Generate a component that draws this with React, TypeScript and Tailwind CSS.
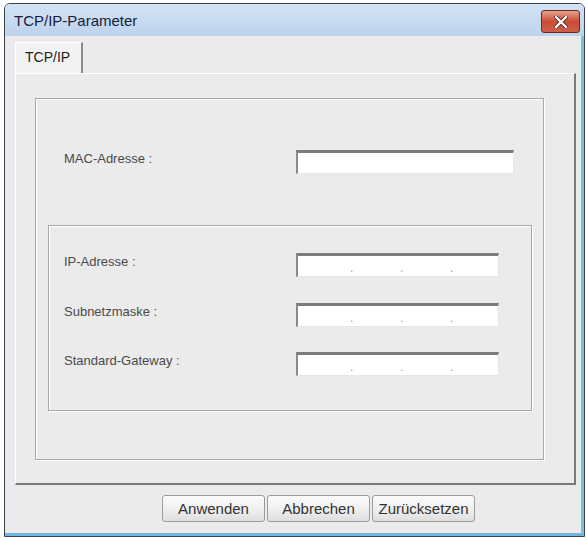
import React from 'react';

const font = { fontFamily: '"Liberation Sans", Arial, sans-serif' };

function Field({ width, ip }: { width: string; ip?: boolean }) {
    return (
        <div
            className={`${width} h-[24px] bg-white border-t-[3px] border-l-[2px] border-r border-b border-t-[#7c7c7c] border-l-[#8a8a8a] border-r-[#e6e6e6] border-b-[#e6e6e6] flex items-end`}
        >
            {ip && (
                <div className="flex pl-[52px] text-[12px] leading-[15px] text-[#c58894]">
                    <span className="w-[50px]">.</span>
                    <span className="w-[50px] text-[#a9a9b0]">.</span>
                    <span className="w-[50px]">.</span>
                </div>
            )}
        </div>
    );
}

function Row({ label, children, className }: { label: string; children: React.ReactNode; className?: string }) {
    return (
        <div className={`flex items-start ${className ?? ''}`}>
            <span className="w-[232px] pt-[1px] text-[13px] leading-[16px] text-[#4a4a4a]">{label}</span>
            {children}
        </div>
    );
}

export default function App() {
    return (
        <div className="min-h-screen bg-white pt-[3px] pl-[4px]" style={font}>
            <div className="w-[581px] h-[534px] border border-[#36404e] rounded-t-[6px] overflow-hidden flex flex-col">
                {/* Title bar */}
                <div className="h-[32px] flex items-start justify-between bg-gradient-to-b from-[#d3e3f4] to-[#bcd3ec]">
                    <span className="pl-[9px] pt-[8px] text-[15px] leading-[18px] text-[#17203a]">TCP/IP-Parameter</span>
                    <div className="mt-[6px] mr-[4px] w-[39px] h-[23px] rounded-[3px] border border-[#6e2a22] bg-gradient-to-b from-[#e3a08f] via-[#cc4b36] to-[#c9614a] flex items-center justify-center">
                        <svg width="14" height="12" viewBox="0 0 14 12">
                            <path d="M2 1 L12 11 M12 1 L2 11" stroke="#5a1a12" strokeWidth="4" strokeLinecap="square" />
                            <path d="M2 1 L12 11 M12 1 L2 11" stroke="#ffffff" strokeWidth="2.4" strokeLinecap="square" />
                        </svg>
                    </div>
                </div>

                {/* Body */}
                <div className="flex-1 flex flex-col bg-[#ebebeb] border-r-[3px] border-b-[3px] border-r-[#7cc1e4] border-b-[#6fb7dd] pt-[6px] pl-[10px] pb-[11px]">
                    {/* Tab */}
                    <div className="w-[68px] h-[31px] bg-[#f2f2f2] border-l border-t border-l-white border-t-white border-r-[2px] border-r-[#8a8a8a] flex items-center pl-[9px] pb-[3px]">
                        <span className="text-[14px] leading-[16px] text-[#222]">TCP/IP</span>
                    </div>

                    {/* Tab panel */}
                    <div className="w-[561px] h-[412px] bg-[#ebebeb] border-l border-t border-l-[#ffffff] border-t-[#ffffff] border-r-2 border-b-2 border-r-[#7a7a7a] border-b-[#7a7a7a] pl-[19px] pt-[24px]">
                        <div className="w-[509px] h-[362px] border border-[#a8a8a8] shadow-[1px_1px_0_#ffffff,inset_1px_1px_0_#ffffff] pl-[28px] pt-[51px]">
                            <Row label="MAC-Adresse :">
                                <Field width="w-[218px]" />
                            </Row>

                            <div className="ml-[-16px] mt-[51px] w-[484px] h-[186px] border border-[#a8a8a8] shadow-[1px_1px_0_#ffffff,inset_1px_1px_0_#ffffff] pl-[15px]">
                                <Row label="IP-Adresse :" className="mt-[27px]">
                                    <Field width="w-[203px]" ip />
                                </Row>
                                <Row label="Subnetzmaske :" className="mt-[26px]">
                                    <Field width="w-[203px]" ip />
                                </Row>
                                <Row label="Standard-Gateway :" className="mt-[25px]">
                                    <Field width="w-[203px]" ip />
                                </Row>
                            </div>
                        </div>
                    </div>

                    {/* Buttons */}
                    <div className="mt-[10px] flex gap-[2px] pl-[147px]">
                        {['Anwenden', 'Abbrechen', 'Zurücksetzen'].map((b) => (
                            <button
                                key={b}
                                className="w-[103px] h-[27px] rounded-[3px] border border-[#9c9c9c] bg-gradient-to-b from-[#fbfbfb] via-[#f0f0f0] to-[#dedede] text-[15px] leading-[18px] text-[#333] whitespace-nowrap"
                            >
                                {b}
                            </button>
                        ))}
                    </div>
                </div>
            </div>
        </div>
    );
}
